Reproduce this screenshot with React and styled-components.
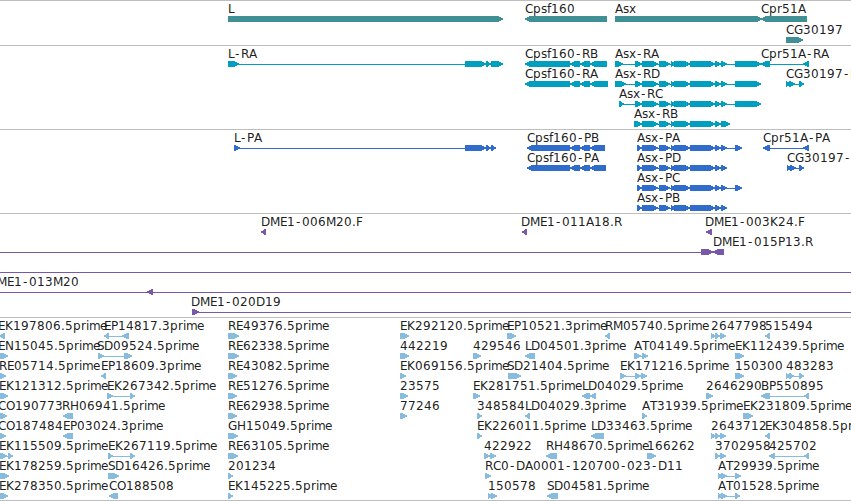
import React from "react";
import styled, { createGlobalStyle } from "styled-components";

const GlobalStyle = createGlobalStyle`
  html, body { margin: 0; padding: 0; background: #fff; overflow: hidden; }
`;

const Browser = styled.main`
  display: flex;
  flex-direction: column;
  width: 851px;
  height: 501px;
  overflow: hidden;
  background: #fff;
  border-bottom: 1px solid #bebebe;
  box-sizing: border-box;
`;

const Track = styled.section`
  display: flex;
  flex-direction: column;
  flex: none;
  gap: ${(p) => p.$gap || 0}px;
  height: ${(p) => p.$height}px;
  box-sizing: border-box;
  border-top: 1px solid #bebebe;
  color: ${(p) => p.$color};
`;

const Lane = styled.svg`
  display: block;
  flex: none;
  width: 851px;
  height: 20px;
  overflow: visible;
`;

const Label = styled.text`
  font: 12px "DejaVu Sans", sans-serif;
  fill: #000;
  fill-opacity: 0.9;
  white-space: pre;
`;

const Glyph = styled.polygon`
  fill: currentColor;
  shape-rendering: crispEdges;
`;

const Connector = styled.rect`
  fill: currentColor;
  shape-rendering: crispEdges;
`;

// Whole-pixel advance of each character at 12px; digits and others are 8.
const ADVANCE = {
  A: 8, B: 8, C: 8, D: 9, E: 7, F: 7, G: 9, H: 9, K: 8, L: 6, M: 10, N: 9,
  O: 9, P: 7, R: 8, S: 7, T: 7, "-": 7, ".": 4, p: 8, r: 5, i: 3, m: 11,
  e: 7, s: 6, f: 4, x: 7,
};

function glyphPositions(text, start) {
  let x = start;
  return [...text]
    .map((ch) => {
      const at = ch === "-" ? x + 1 : x;
      x += ADVANCE[ch] || 8;
      return at;
    })
    .join(" ");
}

function arrow(x1, x2, dir) {
  const tip = Math.min(6, x2 - x1);
  const top = 15;
  const bottom = 21;
  const left = dir === "<";
  const apex = left ? x1 : x2;
  const back = left ? x2 : x1;
  const s = left ? 1 : -1;
  const near = apex + s * tip * 0.8;
  const mid = apex + s * tip * 0.4;
  return [
    [back, top], [near, top], [mid, top + 1.4], [apex, top + 2.4],
    [apex, top + 3.6], [mid, bottom - 1.4], [near, bottom], [back, bottom],
  ].map((p) => p.join(",")).join(" ");
}

// A feature is [label, direction, blocks, options]
function Feature({ data }) {
  const [label, dir, blocks, opts = {}] = data;
  const from = opts.from ?? blocks[0][0];
  const to = opts.to ?? blocks[blocks.length - 1][1];
  const solid = blocks.length === 1 && opts.from === undefined && opts.to === undefined;
  return (
    <g>
      {!solid && <Connector x={from} y={18} width={to - from} height={1} />}
      {blocks.map(([a, b]) => (
        <Glyph key={a} points={arrow(a, b, dir)} />
      ))}
      {label && (
        <Label x={glyphPositions(label, opts.label ?? from)} y={12}>
          {label}
        </Label>
      )}
    </g>
  );
}

const core = [[642, 658], [659, 670], [671, 675], [674, 690], [690, 715], [715, 721]];

const genes = [
  [
    ["L", ">", [[228, 503]]],
    ["Cpsf160", "<", [[525, 607]]],
    ["Asx", ">", [[615, 762]]],
    ["Cpr51A", "<", [[761, 807]]],
  ],
  [["CG30197", ">", [[786, 803]]]],
];

const transcripts = [
  [
    ["L-RA", ">", [[228, 239], [465, 486], [486, 491], [491, 503]]],
    ["Cpsf160-RB", "<", [[525, 570], [570, 580], [580, 590], [590, 607]]],
    ["Asx-RA", ">", [[615, 623], [635, 642], ...core, [721, 727], [735, 761]]],
    ["Cpr51A-RA", "<", [[761, 770], [803, 809]]],
  ],
  [
    ["Cpsf160-RA", "<", [[525, 570], [570, 580], [580, 590], [590, 608]]],
    ["Asx-RD", ">", [[615, 626], [635, 642], ...core, [721, 727], [735, 761]]],
    ["CG30197-RA", ">", [[786, 790], [789, 795], [799, 804]]],
  ],
  [["Asx-RC", ">", [[619, 624], [635, 642], ...core, [721, 727], [735, 761]]]],
  [["Asx-RB", ">", [[634, 642], ...core, [721, 730]]]],
];

const proteins = [
  [
    ["L-PA", ">", [[234, 240], [465, 486], [486, 491], [491, 496]]],
    ["Cpsf160-PB", "<", [[527, 570], [570, 580], [580, 590], [590, 605]]],
    ["Asx-PA", ">", [[637, 642], ...core, [721, 727], [735, 742]]],
    ["Cpr51A-PA", "<", [[763, 770], [803, 809]]],
  ],
  [
    ["Cpsf160-PA", "<", [[527, 570], [570, 580], [580, 590], [590, 606]]],
    ["Asx-PD", ">", [[637, 642], ...core, [721, 727]]],
    ["CG30197-PA", ">", [[787, 791], [790, 796], [799, 804]]],
  ],
  [["Asx-PC", ">", [[637, 642], ...core, [721, 727], [735, 742]]]],
  [["Asx-PB", ">", [[637, 642], ...core, [721, 727]]]],
];

const clones = [
  [
    ["DME1-006M20.F", "<", [[261, 266]]],
    ["DME1-011A18.R", "<", [[522, 527]], { label: 521 }],
    ["DME1-003K24.F", "<", [[706, 712]], { label: 705 }],
  ],
  [
    ["", ">", [[701, 713]], { from: 0 }],
    ["DME1-015P13.R", "<", [[713, 724]]],
  ],
  [["", ">", [], { from: 0, to: 851 }]],
  [["DME1-013M20", "<", [[147, 153]], { from: 0, to: 851, label: -12 }]],
  [["DME1-020D19", ">", [[192, 199]], { to: 851, label: 191 }]],
];

const ests = [
  [
    ["EK197806.5prime", "<", [[-1, 5]], { label: -2 }],
    ["EP14817.3prime", "<", [[104, 109], [122, 129]]],
    ["RE49376.5prime", ">", [[228, 239]]],
    ["EK292120.5prime", ">", [[400, 409]]],
    ["EP10521.3prime", ">", [[507, 516]]],
    ["RM05740.5prime", "<", [[605, 610]]],
    ["2647798", ">", [[711, 715], [715, 720], [720, 726]]],
    ["515494", "<", [[765, 770]]],
  ],
  [
    ["EN15045.5prime", ">", [[0, 8]], { label: -2 }],
    ["SD09524.5prime", ">", [[98, 104], [124, 132]], { label: 97 }],
    ["RE62338.5prime", ">", [[228, 239]]],
    ["442219", ">", [[400, 409]]],
    ["429546", ">", [[473, 481]]],
    ["LD04501.3prime", "<", [[525, 535]]],
    ["AT04149.5prime", ">", [[634, 641], [642, 648]]],
    ["EK112439.5prime", ">", [[735, 744]]],
  ],
  [
    ["RE05714.5prime", ">", [[0, 6]], { label: -1 }],
    ["EP18609.3prime", "<", [[101, 106]]],
    ["RE43082.5prime", ">", [[228, 237]]],
    ["EK069156.5prime", ">", [[400, 406]]],
    ["SD21404.5prime", ">", [[508, 521]], { label: 507 }],
    ["EK171216.5prime", ">", [[620, 626], [635, 641], [641, 647]]],
    ["150300", ">", [[735, 744]]],
    ["483283", ">", [[786, 790], [789, 794], [799, 804]]],
  ],
  [
    ["EK121312.5prime", ">", [[0, 8]], { label: -1 }],
    ["EK267342.5prime", ">", [[107, 113], [130, 135]]],
    ["RE51276.5prime", ">", [[228, 237]]],
    ["23575", ">", [[400, 408]]],
    ["EK281751.5prime", ">", [[473, 480]]],
    ["LD04029.5prime", "<", [[582, 590], [590, 596]]],
    ["2646290", ">", [[706, 713]]],
    ["BP550895", "<", [[761, 770], [804, 809]]],
  ],
  [
    ["CO190773", ">", [[0, 7]], { label: -2 }],
    ["RH06941.5prime", "<", [[63, 73]], { label: 62 }],
    ["RE62938.5prime", ">", [[228, 237]]],
    ["77246", ">", [[400, 407]]],
    ["348584", ">", [[477, 482]]],
    ["LD04029.3prime", "<", [[525, 530]]],
    ["AT31939.5prime", ">", [[642, 647]]],
    ["EK231809.5prime", ">", [[743, 753]]],
  ],
  [
    ["CO187484", ">", [[0, 6]], { label: -2 }],
    ["EP03024.3prime", "<", [[63, 73]]],
    ["GH15049.5prime", ">", [[228, 238]]],
    ["EK226011.5prime", ">", [[477, 482]]],
    ["LD33463.5prime", "<", [[591, 604]]],
    ["2643712", ">", [[711, 715], [715, 720], [720, 726]]],
    ["EK304858.5prime", "<", [[765, 770]]],
  ],
  [
    ["EK115509.5prime", ">", [[0, 7], [8, 13]], { label: -1 }],
    ["EK267119.5prime", ">", [[108, 113], [130, 135]]],
    ["RE63105.5prime", ">", [[228, 238]]],
    ["422922", ">", [[484, 490], [490, 496]]],
    ["RH48670.5prime", "<", [[546, 557]]],
    ["166262", ">", [[647, 656]]],
    ["3702958", ">", [[715, 720], [720, 726]]],
    ["425702", "<", [[769, 775], [804, 809]]],
  ],
  [
    ["EK178259.5prime", ">", [[0, 9]], { label: -1 }],
    ["SD16426.5prime", ">", [[108, 119]]],
    ["201234", ">", [[228, 233]]],
    ["RC0-DA0001-120700-023-D11", ">", [[485, 491]]],
    ["AT29939.5prime", ">", [[718, 722], [721, 727], [735, 741]]],
  ],
  [
    ["EK278350.5prime", ">", [[0, 8]], { label: -1 }],
    ["CO188508", "<", [[109, 118]]],
    ["EK145225.5prime", ">", [[228, 233]]],
    ["150578", ">", [[488, 492], [491, 497]]],
    ["SD04581.5prime", "<", [[547, 558]]],
    ["AT01528.5prime", ">", [[718, 722], [721, 727], [735, 740]]],
  ],
];

const tracks = [
  { id: "genes", color: "#3f8f94", height: 45, gap: 1, lanes: genes },
  { id: "transcripts", color: "#009ebf", height: 84, lanes: transcripts },
  { id: "proteins", color: "#306ccc", height: 84, lanes: proteins },
  { id: "clones", color: "#7859a9", height: 104, lanes: clones },
  { id: "ests", color: "#87bcde", height: 183, lanes: ests },
];

export default function App() {
  return (
    <>
      <GlobalStyle />
      <Browser>
        {tracks.map((t) => (
          <Track key={t.id} $color={t.color} $height={t.height} $gap={t.gap}>
            {t.lanes.map((lane, i) => (
              <Lane key={i} viewBox="0 0 851 20">
                {lane.map((f, j) => (
                  <Feature key={j} data={f} />
                ))}
              </Lane>
            ))}
          </Track>
        ))}
      </Browser>
    </>
  );
}
